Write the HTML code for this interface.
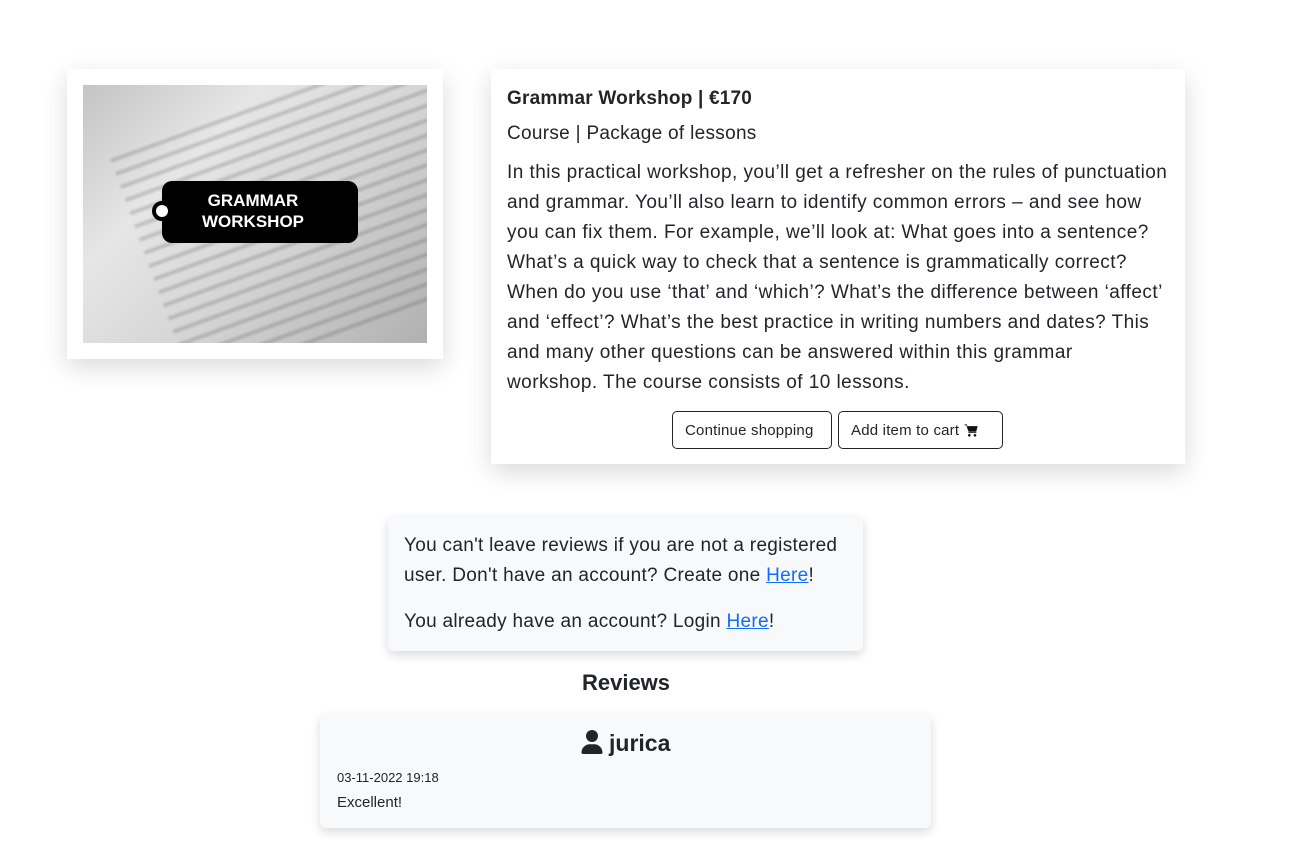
<!DOCTYPE html>
<html><head><meta charset="utf-8"><style>
body{margin:0;background:#fff;font-family:"Liberation Sans",sans-serif;color:#212529;width:1312px;height:868px;overflow:hidden;position:relative}
.imgbox{position:absolute;left:67px;top:69px;width:376px;height:290px;background:#fff;box-shadow:0 8px 24px rgba(0,0,0,.15)}
.img{position:absolute;left:16px;top:16px;width:344px;height:258px;background:linear-gradient(135deg,#c4c4c4 0%,#e6e6e6 30%,#d4d4d4 60%,#b0b0b0 100%);overflow:hidden}
.img .lines{position:absolute;left:60px;top:10px;width:330px;height:250px;transform:rotate(-20deg);background:repeating-linear-gradient(180deg,rgba(70,70,70,.22) 0 4px,transparent 4px 14px);filter:blur(1px)}
.tag{position:absolute;left:79px;top:96px;width:196px;height:62px;background:#000;border-radius:10px;color:#fff;font-weight:bold;font-size:17px;text-align:center;line-height:21px;padding:9px 14px 0 0;box-sizing:border-box}
.tag:before{content:"";position:absolute;left:-10px;top:20px;width:12px;height:12px;border-radius:50%;background:#fff;border:4px solid #000}
.card{position:absolute;left:491px;top:69px;width:694px;height:395px;background:#fff;box-shadow:0 8px 24px rgba(0,0,0,.15)}
.card h1{position:absolute;left:16px;top:19px;margin:0;font-size:19px;font-weight:bold;letter-spacing:.2px}
.card .sub{position:absolute;left:16px;top:54px;font-size:19px;letter-spacing:.3px}
.card .desc{position:absolute;left:16px;top:89px;font-size:19px;line-height:30px;white-space:nowrap;letter-spacing:.45px}
.btn{position:absolute;top:342px;height:38px;border:1px solid #212529;border-radius:5px;font-size:15px;line-height:38px;padding:0 12px;box-sizing:border-box;letter-spacing:.2px}
.note{position:absolute;left:388px;top:516px;width:475px;height:135px;background:#f8f9fa;border-radius:6px;box-shadow:0 4px 10px rgba(0,0,0,.15);font-size:19px;line-height:30px;letter-spacing:.3px}
a{color:#0d6efd;text-decoration:underline}
.rev{position:absolute;left:320px;top:714px;width:611px;height:114px;background:#f8f9fa;border-radius:6px;box-shadow:0 4px 10px rgba(0,0,0,.15)}
</style></head><body>
<div class="imgbox"><div class="img"><div class="lines"></div><div class="tag">GRAMMAR<br>WORKSHOP</div></div></div>
<div class="card">
<h1>Grammar Workshop | €170</h1>
<div class="sub">Course | Package of lessons</div>
<div class="desc">In this practical workshop, you’ll get a refresher on the rules of punctuation<br>and grammar. You’ll also learn to identify common errors – and see how<br>you can fix them. For example, we’ll look at: What goes into a sentence?<br>What’s a quick way to check that a sentence is grammatically correct?<br>When do you use ‘that’ and ‘which’? What’s the difference between ‘affect’<br>and ‘effect’? What’s the best practice in writing numbers and dates? This<br>and many other questions can be answered within this grammar<br>workshop. The course consists of 10 lessons.</div>
<div class="btn" style="left:181px;width:160px">Continue shopping</div>
<div class="btn" style="left:347px;width:165px">Add item to cart <svg width="15" height="14" viewBox="0 0 16 16" style="vertical-align:-2px"><path d="M0 1.5h2.5l.6 2H15l-1.6 6.5H4.7L2 2.5H0z" fill="#111"/><path d="M4.5 10.5h9v1h-9z" fill="#111"/><circle cx="5.5" cy="14" r="1.5" fill="#111"/><circle cx="12" cy="14" r="1.5" fill="#111"/></svg></div>
</div>
<div class="note"><div style="position:absolute;left:16px;top:15px;white-space:nowrap">You can't leave reviews if you are not a registered<br>user. Don't have an account? Create one <a>Here</a>!</div>
<div style="position:absolute;left:16px;top:91px;white-space:nowrap">You already have an account? Login <a>Here</a>!</div></div>
<div style="position:absolute;left:0;width:1252px;top:670px;text-align:center;font-size:22px;font-weight:bold">Reviews</div>
<div class="rev">
<div style="position:absolute;left:0;right:0;top:16px;text-align:center;font-size:23px;font-weight:bold"><svg width="22" height="24" viewBox="0 0 448 512" style="vertical-align:-3px"><path fill="#212529" d="M224 256a128 128 0 1 0 0-256 128 128 0 1 0 0 256zm-45.7 48C79.8 304 0 383.8 0 482.3 0 498.7 13.3 512 29.7 512h388.6c16.4 0 29.7-13.3 29.7-29.7C448 383.8 368.2 304 269.7 304z"/></svg> jurica</div>
<div style="position:absolute;left:17px;top:56px;font-size:13px">03-11-2022 19:18</div>
<div style="position:absolute;left:17px;top:80px;font-size:15px">Excellent!</div>
</div>
</body></html>
